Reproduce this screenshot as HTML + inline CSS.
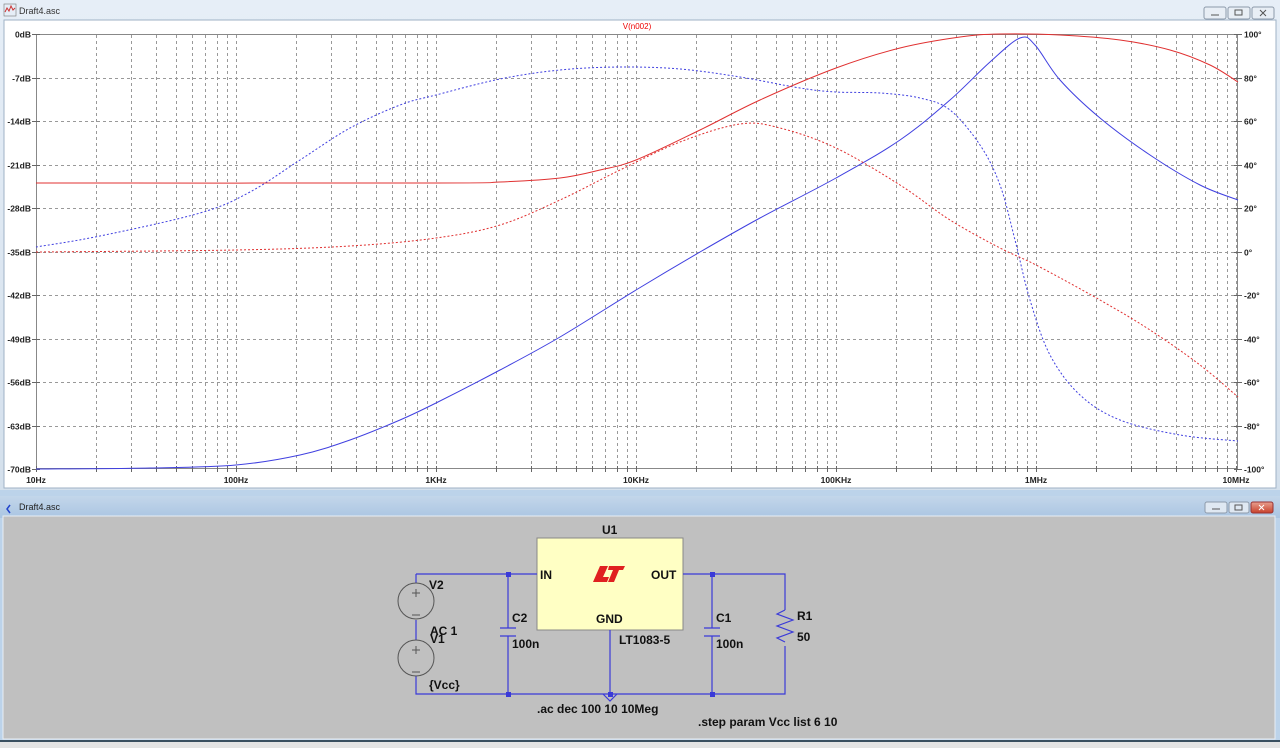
<!DOCTYPE html>
<html><head><meta charset="utf-8"><style>
html,body{margin:0;padding:0;width:1280px;height:748px;overflow:hidden;background:#c9d6e3;font-family:"Liberation Sans",sans-serif}
svg text{font-family:"Liberation Sans",sans-serif}
</style></head><body>
<svg id="s" width="1280" height="748" viewBox="0 0 1280 748" xmlns="http://www.w3.org/2000/svg">
<defs>
<linearGradient id="tb" x1="0" y1="0" x2="0" y2="1"><stop offset="0" stop-color="#e6eef7"/><stop offset="1" stop-color="#d4e0ec"/></linearGradient>
<linearGradient id="tb2" x1="0" y1="0" x2="0" y2="1"><stop offset="0" stop-color="#c3d6ea"/><stop offset="1" stop-color="#aac5e2"/></linearGradient>
<linearGradient id="cl" x1="0" y1="0" x2="0" y2="1"><stop offset="0" stop-color="#e8a090"/><stop offset="1" stop-color="#c8402a"/></linearGradient>
</defs>
<rect x="0" y="0" width="1280" height="490" fill="url(#tb)"/>
<rect x="4" y="20" width="1272" height="468" fill="#fff" stroke="#9fb2c6"/>
<text x="19" y="14" font-size="9" fill="#333">Draft4.asc</text>
<path d="M5 12 l2-4 2 3 2-5 2 4 2-2" stroke="#c33" fill="none"/><rect x="4" y="4" width="12" height="12" fill="none" stroke="#777" stroke-width=".6"/>
<g stroke="#8d9aaa" fill="#e8eef5"><rect x="1204" y="7" width="22" height="12" rx="2"/><rect x="1228" y="7" width="22" height="12" rx="2"/><rect x="1252" y="7" width="22" height="12" rx="2"/></g>
<g stroke="#555" fill="none"><path d="M1211 15h8"/><rect x="1235" y="10" width="7" height="5"/><path d="M1260 10l6 6M1266 10l-6 6"/></g>
<text x="637" y="29" font-size="8" fill="#e00" text-anchor="middle">V(n002)</text>
<g id="grid" stroke="#999" stroke-width="1" stroke-dasharray="3,3"></g>
<rect x="36.5" y="34.5" width="1201" height="434" fill="none" stroke="#888"/>
<g id="ticks" stroke="#666"></g>
<g font-size="8.5" font-weight="bold" fill="#222" id="lbl"></g>
<polyline class="c" fill="none" stroke="#4040e0" stroke-width="1" points="36,469 150,468 236,465 300,455 350,440 400,420 436,403 500,370 560,337 636,290 700,252 760,218 836,178 900,140 950,100 990,62 1020,38 1035,45 1060,80 1100,118 1150,155 1200,185 1238,200"/>
<polyline class="c" fill="none" stroke="#4040e0" stroke-width="1" stroke-dasharray="2,2" points="36,247 100,236 200,213 250,192 300,160 350,128 400,105 436,95 500,79 560,70 620,67 680,69 740,77 800,88 836,92 880,93 920,98 950,110 980,145 1000,185 1015,240 1030,300 1050,355 1080,395 1120,420 1180,435 1238,441"/>
<polyline class="c" fill="none" stroke="#e03030" stroke-width="1" points="36,183 436,183 500,182 560,178 600,170 636,160 700,130 760,100 836,68 900,48 960,37 1000,34 1060,35 1120,40 1170,50 1210,65 1238,82"/>
<polyline class="c" fill="none" stroke="#e03030" stroke-width="1" stroke-dasharray="2,2" points="36,252 236,250 350,246 436,238 500,225 560,200 620,170 680,142 740,124 780,128 836,148 900,185 950,220 1000,248 1036,265 1100,300 1150,330 1200,365 1238,397"/>
<rect x="0" y="490" width="1280" height="258" fill="#bcd3ea"/>
<rect x="0" y="496" width="1280" height="22" fill="url(#tb2)"/>
<text x="19" y="510" font-size="9" fill="#222">Draft4.asc</text>
<path d="M10 505 l-3 4 3 4" stroke="#24c" fill="none" stroke-width="1.5"/>
<g stroke="#8d9aaa" fill="#dfe8f2"><rect x="1205" y="502" width="22" height="11" rx="2"/><rect x="1229" y="502" width="20" height="11" rx="2"/></g>
<rect x="1251" y="502" width="22" height="11" rx="2" fill="url(#cl)" stroke="#933"/>
<g stroke="#555" fill="none"><path d="M1212 509h8"/><rect x="1235" y="505" width="7" height="5"/></g><path d="M1259 505l5 5M1264 505l-5 5" stroke="#fff"/>
<rect x="3" y="516" width="1272" height="223" fill="#c0c0c0" stroke="#e8eef4"/>
<rect x="0" y="740" width="1280" height="2" fill="#3a5060"/>
<rect x="0" y="742" width="1280" height="6" fill="#e4e4e4"/>
<rect x="537" y="538" width="146" height="92" fill="#ffffc4" stroke="#888"/>
<g stroke="#3a3ad8" fill="none" stroke-width="1.2">
<path d="M416 574H537M683 574H785V610M785 646V694H416V676M416 640V620M416 583V574"/>
<path d="M508 574V628M508 636V694M712 574V628M712 636V694M610 630V694"/>
<path d="M500 628h16M500 636h16M704 628h16M704 636h16"/>
<path d="M785 610l-8 4 16 6-16 6 16 6-16 6 8 4"/>
<path d="M603 694l7 7 7-7"/>
</g>
<g stroke="#555" fill="none"><circle cx="416" cy="601" r="18"/><circle cx="416" cy="658" r="18"/><path d="M412 593h8M416 589v8M412 615h8M412 650h8M416 646v8M412 672h8"/></g>
<g fill="#3a3ad8"><rect x="506" y="572" width="5" height="5"/><rect x="506" y="692" width="5" height="5"/><rect x="710" y="572" width="5" height="5"/><rect x="710" y="692" width="5" height="5"/><rect x="608" y="692" width="5" height="5"/></g>
<path d="M600 566h8l-5 11h6l-2 5h-14zM609 566h16l-2 4h-4l-5 12h-6l5-12h-5z" fill="#e02020"/>
<g font-size="12" font-weight="bold" fill="#111">
<text x="602" y="534">U1</text><text x="540" y="579">IN</text><text x="651" y="579">OUT</text><text x="596" y="623">GND</text>
<text x="619" y="644">LT1083-5</text>
<text x="512" y="622">C2</text><text x="512" y="648">100n</text>
<text x="716" y="622">C1</text><text x="716" y="648">100n</text>
<text x="797" y="620">R1</text><text x="797" y="641">50</text>
<text x="429" y="589">V2</text><text x="430" y="635">AC 1</text><text x="430" y="643">V1</text><text x="429" y="689">{Vcc}</text>
<text x="537" y="713">.ac dec 100 10 10Meg</text>
<text x="698" y="726">.step param Vcc list 6 10</text>
</g>
</svg>
<script>
var ns="http://www.w3.org/2000/svg",g=document.getElementById('grid'),t=document.getElementById('ticks'),l=document.getElementById('lbl');
function el(p,tag,a,txt){var e=document.createElementNS(ns,tag);for(var k in a)e.setAttribute(k,a[k]);if(txt)e.textContent=txt;p.appendChild(e);return e;}
for(var d=0;d<6;d++)for(var k=1;k<=10;k++){if(d>0&&k==1)continue;var x=36+200*(d+Math.log10(k));x=Math.round(x)+.5;if(x>37&&x<1237)el(g,'line',{x1:x,y1:35,x2:x,y2:468});el(t,'line',{x1:x,y1:466,x2:x,y2:472});}
for(var i=0;i<=10;i++){var y=Math.round(34+i*43.5)+.5;if(i>0&&i<10)el(g,'line',{x1:37,y1:y,x2:1237,y2:y});el(t,'line',{x1:32,y1:y,x2:40,y2:y});el(t,'line',{x1:1234,y1:y,x2:1242,y2:y});
el(l,'text',{x:31,y:y+3,'text-anchor':'end'},(i==0?'0':'-'+7*i)+'dB');el(l,'text',{x:1244,y:y+3},(100-20*i)+'°');}
var f=['10Hz','100Hz','1KHz','10KHz','100KHz','1MHz','10MHz'];for(var j=0;j<7;j++)el(l,'text',{x:36+200*j,y:483,'text-anchor':'middle'},f[j]);
document.querySelectorAll('polyline.c').forEach(function(pl){
var p=pl.getAttribute('points').trim().split(/\s+/).map(function(s){return s.split(',').map(Number)});
var d='M'+p[0][0]+' '+p[0][1];
for(var i=0;i<p.length-1;i++){var a=p[Math.max(i-1,0)],b=p[i],c=p[i+1],e=p[Math.min(i+2,p.length-1)];
d+=' C'+(b[0]+(c[0]-a[0])/6)+' '+(b[1]+(c[1]-a[1])/6)+' '+(c[0]-(e[0]-b[0])/6)+' '+(c[1]-(e[1]-b[1])/6)+' '+c[0]+' '+c[1];}
var path=el(pl.parentNode,'path',{d:d,fill:'none',stroke:pl.getAttribute('stroke'),'stroke-width':1});
if(pl.getAttribute('stroke-dasharray'))path.setAttribute('stroke-dasharray','2,2');
pl.parentNode.removeChild(pl);});
</script>
</body></html>
